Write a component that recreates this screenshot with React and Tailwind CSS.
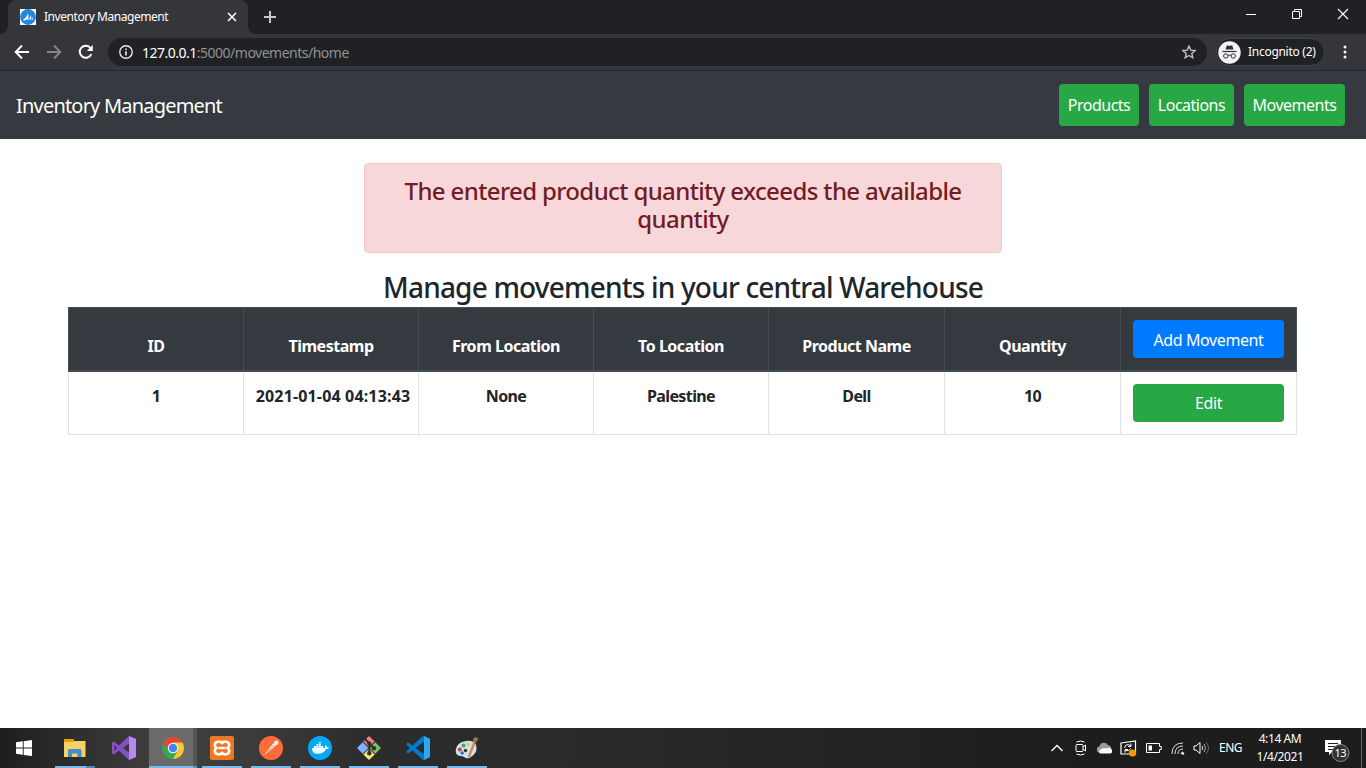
import React from "react";

function Logo({ children, size = 24, box = "0 0 24 24" }) {
  return (
    <svg width={size} height={size} viewBox={box} fill="none" className="shrink-0">
      {children}
    </svg>
  );
}

function TabStrip() {
  return (
    <div className="flex h-[34px] items-end bg-[#202124]">
      <svg width="8" height="8" className="shrink-0"><path d="M8 0V8H0A8 8 0 0 0 8 0Z" fill="#35363a" /></svg>
      <div className="flex h-[34px] w-[240px] items-center rounded-t-lg bg-[#35363a] pl-3 pr-[11px]">
        <svg width="16" height="16" viewBox="0 0 16 16" className="shrink-0">
          <rect width="16" height="16" fill="#fff" />
          <circle cx="8" cy="8" r="7.9" fill="#1e88e5" />
          <path d="M3 11.3Q6 8.8 8.2 4.4L8.6 10.6Q6.5 10 4.6 11.4ZM9.2 10.4 10.6 5.6 11 10.6ZM11.5 10.5 12 7.2 13 11Z" fill="#fff" />
        </svg>
        <span className="ml-2 whitespace-nowrap text-[12px] tracking-[-0.45px] text-white">Inventory Management</span>
        <svg width="10" height="10" viewBox="0 0 10 10" className="ml-auto"><path d="M1 1 9 9M9 1 1 9" stroke="#fff" strokeWidth="1.6" /></svg>
      </div>
      <svg width="8" height="8" className="shrink-0"><path d="M0 0V8H8A8 8 0 0 1 0 0Z" fill="#35363a" /></svg>
      <svg width="12" height="12" viewBox="0 0 12 12" className="mb-[11px] ml-2"><path d="M6 0V12M0 6H12" stroke="#c8c9cb" strokeWidth="2" /></svg>
      <div className="ml-auto flex h-[28px] items-center self-start pr-[17px]">
        <svg width="10" height="10" viewBox="0 0 10 10" className="mr-9"><path d="M0 5.5H10" stroke="#fff" /></svg>
        <svg width="10" height="10" viewBox="0 0 10 10" className="mr-[35px]"><path d="M.5 2.5H7.5V9.5H.5ZM2.5 2.5V.5H9.5V7.5H7.5" stroke="#fff" fill="none" /></svg>
        <svg width="12" height="12" viewBox="0 0 12 12"><path d="M1 1 11 11M11 1 1 11" stroke="#fff" strokeWidth="1.1" /></svg>
      </div>
    </div>
  );
}

function Toolbar() {
  return (
    <div className="flex h-[37px] items-center border-b border-[#25272a] bg-[#35363a]">
      <svg width="16" height="16" viewBox="0 0 16 16" className="ml-[14px]"><path d="M15 8H2M8 1.5 1.7 8 8 14.5" stroke="#fff" strokeWidth="1.9" fill="none" /></svg>
      <svg width="16" height="16" viewBox="0 0 16 16" className="ml-4"><path d="M1 8H14M8 1.5 14.3 8 8 14.5" stroke="#85868a" strokeWidth="1.9" fill="none" /></svg>
      <svg width="16" height="16" viewBox="0 0 16 16" className="ml-4"><path d="M13.3 10.1A6 6 0 1 1 12.6 4.2" stroke="#fff" strokeWidth="2" fill="none" /><path d="M14.8 1V7H8.8Z" fill="#fff" /></svg>
      <div className="ml-[14px] flex h-7 w-[1099px] items-center rounded-full bg-[#202124] pl-[11px] pr-[11px]">
        <svg width="14" height="14" viewBox="0 0 14 14"><circle cx="7" cy="7" r="6.2" stroke="#e8eaed" strokeWidth="1.4" fill="none" /><path d="M7 6.2V10.5M7 3.5V5" stroke="#e8eaed" strokeWidth="1.6" /></svg>
        <span className="ml-[9px] text-[14px] tracking-[-0.5px] text-[#8f9194]"><span className="text-white">127.0.0.1</span>:5000/movements/home</span>
        <svg width="14" height="14" viewBox="0 0 14 14" className="ml-auto"><path d="M7 1 8.7 5.1 13.2 5.5 9.8 8.4 10.8 12.8 7 10.5 3.2 12.8 4.2 8.4.8 5.5 5.3 5.1Z" stroke="#bdc1c6" strokeWidth="1.4" fill="none" /></svg>
      </div>
      <div className="ml-[9px] flex h-7 w-[109px] items-center rounded-full border border-[#414246] bg-[#202124] pl-[1px]">
        <svg width="23" height="23" viewBox="0 0 23 23" className="shrink-0">
          <circle cx="11.5" cy="11.5" r="11.2" fill="#f1f3f4" />
          <path d="M7.5 8.5 8.7 4.6H10.2L11.5 5 12.8 4.6H14.3L15.5 8.5Z" fill="#303134" />
          <path d="M4.5 10.5H18.5" stroke="#303134" strokeWidth="1.2" />
          <path d="M10 14.5Q11.5 13.6 13 14.5" stroke="#303134" fill="none" />
          <circle cx="7.8" cy="15" r="2.2" stroke="#303134" fill="none" />
          <circle cx="15.2" cy="15" r="2.2" stroke="#303134" fill="none" />
        </svg>
        <span className="ml-[7px] whitespace-nowrap text-[12px] tracking-[-0.28px] text-white">Incognito (2)</span>
      </div>
      <svg width="4" height="14" viewBox="0 0 4 14" className="ml-[18px]" fill="#fff"><circle cx="2" cy="2" r="1.5" /><circle cx="2" cy="7" r="1.5" /><circle cx="2" cy="12" r="1.5" /></svg>
    </div>
  );
}

function Navbar() {
  return (
    <nav className="flex h-[68px] items-center bg-[#343a40] pl-4 pr-[21px] text-white">
      <span className="pt-px text-[20px] tracking-[-0.8px]">Inventory Management</span>
      <div className="ml-auto flex gap-[10px] text-[16px] tracking-[-0.5px]">
        <a className="flex h-[42px] w-[80px] items-center justify-center rounded bg-[#28a745]">Products</a>
        <a className="flex h-[42px] w-[85px] items-center justify-center rounded bg-[#28a745]">Locations</a>
        <a className="flex h-[42px] w-[101px] items-center justify-center rounded bg-[#28a745]">Movements</a>
      </div>
    </nav>
  );
}

const heads = ["ID", "Timestamp", "From Location", "To Location", "Product Name", "Quantity"];
const row = ["1", "2021-01-04 04:13:43", "None", "Palestine", "Dell", "10"];

function Movements() {
  return (
    <main className="flex h-[589px] flex-col items-center bg-white pt-6 text-[#212529]">
      <div className="h-[90px] w-[638px] rounded border border-[#f5c6cb] bg-[#f8d7da] px-5 pt-[13px] text-center text-[24px] font-medium leading-[28px] tracking-[-0.62px] text-[#721c24]">
        The entered product quantity exceeds the available quantity
      </div>
      <h1 className="mt-[17px] h-[37px] text-[28px] font-medium leading-[34px] tracking-[-0.81px]">Manage movements in your central Warehouse</h1>
      <div className="mr-px w-[1229px] text-[16px] font-bold">
        <div className="grid h-[65px] grid-cols-[175px_175px_175px_175px_176px_176px_177px] border-b-2 border-t border-[#454d55] bg-[#343a40] text-white">
          {heads.map((h) => (
            <div key={h} className="flex items-end justify-center border-l border-[#454d55] pb-3 tracking-[-0.48px]">{h}</div>
          ))}
          <div className="border-x border-[#454d55] px-3 pt-3">
            <button className="flex h-[38px] w-[151px] items-center justify-center rounded bg-[#007bff] pt-px text-[16px] font-normal tracking-[-0.4px]">Add Movement</button>
          </div>
        </div>
        <div className="grid h-[63px] grid-cols-[175px_175px_175px_175px_176px_176px_177px] border-b border-[#dee2e6]">
          {row.map((c, i) => (
            <div key={c} className={`flex justify-center whitespace-nowrap border-l border-[#dee2e6] pt-3 ${i === 1 ? "pl-1 tracking-[0.16px]" : "tracking-[-0.6px]"}`}>{c}</div>
          ))}
          <div className="border-x border-[#dee2e6] px-3 pt-3">
            <button className="flex h-[38px] w-[151px] items-center justify-center rounded bg-[#28a745] text-[16px] font-normal tracking-[-0.4px] text-white">Edit</button>
          </div>
        </div>
      </div>
    </main>
  );
}

const apps = [
  <Logo key="files"><path d="M1 3H10.5V5H22.5V21H1Z" fill="#fbd063" /><path d="M1 3H10.5V6H1Z" fill="#dfa00c" /><path d="M5 21V14.5Q5 13 6.5 13H17Q18.5 13 18.5 14.5V21H14.5V17.5H9V21Z" fill="#3c91d6" /></Logo>,
  <Logo key="vs"><path d="M17 0 24 3V21L17 24 7 14.5 2 18.5 0 17.5V6.5L2 5.5 7 9.5ZM17.5 7 11 12 17.5 17ZM2.5 9V15L5 12Z" fill="#8450c8" fillRule="evenodd" /><path d="M17 0 24 3V21L17 24Z" fill="#b889f3" /></Logo>,
  <Logo key="chrome"><circle cx="12" cy="12" r="11" fill="#34a853" /><path d="M2.5 6.5A11 11 0 0 1 21.5 6.5H12L7.2 14.8Z" fill="#ea4335" /><path d="M21.5 6.5A11 11 0 0 1 12 23L16.8 14.8 12 6.5Z" fill="#fbc52d" /><circle cx="12" cy="12" r="5.3" fill="#fff" /><circle cx="12" cy="12" r="4.3" fill="#4285f4" /></Logo>,
  <Logo key="xampp"><rect width="24" height="24" rx="2" fill="#ef7622" /><path d="M12 7.2C10.5 4.8 4.8 5.2 4.8 9Q4.8 11 6.5 12 4.8 13 4.8 15C4.8 18.8 10.5 19.2 12 16.8 13.5 19.2 19.2 18.8 19.2 15Q19.2 13 17.5 12 19.2 11 19.2 9C19.2 5.2 13.5 4.8 12 7.2ZM9.5 12H14.5" stroke="#fff" strokeWidth="2.7" strokeLinejoin="round" strokeLinecap="round" /></Logo>,
  <Logo key="postman"><circle cx="12" cy="12" r="12" fill="#ff6c37" /><path d="M5 19 12 10 15 7 17 9 14 12Z" fill="#fff" /><circle cx="17.2" cy="6.8" r="2.2" fill="#fff" /><path d="M8 16 15 9" stroke="#ff6c37" strokeWidth=".7" /></Logo>,
  <Logo key="docker"><circle cx="12" cy="12" r="12" fill="#03a9f4" /><path d="M4 12H17Q17.3 10.5 17 9.8L17.8 9Q18.9 10 18.9 11 20.2 10.8 21 11.4 20.2 13 18.2 13 16 17.8 9.5 17.8 4 17.8 4 12ZM6 9.9H8V12H6ZM8.4 9.7H10.4V12H8.4ZM10.8 9.7H12.8V12H10.8ZM13.2 9.9H15.2V12H13.2ZM8.4 7.9H10.4V9.4H8.4ZM10.8 7.9H12.8V9.4H10.8ZM10.8 6H12.8V7.5H10.8Z" fill="#fff" /></Logo>,
  <Logo key="git"><path d="M12 0 17.7 5.6 12 11.2 6.3 5.6Z" fill="#f07c80" /><path d="M5.7 6.2 11.4 12 5.7 17.8 0 12Z" fill="#80b3ff" /><path d="M18.3 6.2 24 12 18.3 17.8 12.6 12Z" fill="#75c95f" /><path d="M12 12.8 17.7 18.4 12 24 6.3 18.4Z" fill="#f9e27a" /><path d="M8 3 12.3 7.3V17.5M12.3 7.5 17 12.3" stroke="#302e2e" strokeWidth="2" /><circle cx="12.3" cy="7.5" r="2.1" fill="#302e2e" /><circle cx="12.3" cy="17.3" r="2.2" fill="#302e2e" /><circle cx="17" cy="12.3" r="2.2" fill="#302e2e" /></Logo>,
  <Logo key="code"><path d="M17 0 24 3V21L17 24 1.2 9.5Q-.2 8.2 1.2 7L2 6.3 18 18.5V5.5L2 17.7.8 16.6Q-.2 15.5 1 14.5Z" fill="#007acc" /><path d="M18 0 24 3V21L18 24Z" fill="#31a7f0" /></Logo>,
  <Logo key="paint"><path d="M11 5Q2 6 .8 13.5 0 20 5.5 20 8 20 9 21 13 24 18 19.5 23 15 21 9 18.5 4 11 5Z" fill="#cae3ef" /><circle cx="8.5" cy="9.5" r="2" fill="#4aa83e" /><circle cx="4.8" cy="13.5" r="2" fill="#dc3d2c" /><circle cx="13.2" cy="8.5" r="1.8" fill="#f4c641" /><circle cx="7.2" cy="17" r="1.8" fill="#2876c8" /><circle cx="10.5" cy="14.5" r="1.7" fill="#333" /><path d="M20 5 13.8 21" stroke="#d98a38" strokeWidth="2.2" /><path d="M18 5Q17.5 1.5 21 1L23.5 2.5 21.5 6Z" fill="#987052" /></Logo>,
];

function Taskbar() {
  return (
    <footer className="flex h-10 bg-[linear-gradient(to_right,#1e1e1e_0%,#292929_4%,#404040_12%,#3c3c3c_18%,#2c2c2c_27%,#2a2a2a_40%,#1d1d1d_80%)] text-white">
      <div className="flex w-[50px] items-center pl-4">
        <svg width="16" height="16" viewBox="0 0 16 16" fill="#fff"><path d="M0 2.3 6.8 1.3V7.6H0ZM7.7 1.2 16 0V7.6H7.7ZM0 8.5H6.8V14.8L0 13.8ZM7.7 8.5H16V16L7.7 14.9Z" /></svg>
      </div>
      {apps.map((app, i) => (
        <div key={i} className={i === 2 ? "ml-px flex h-10 w-12 flex-col items-center bg-[#6b6b6b] shadow-[inset_-4px_0_#555555]" : "flex h-10 w-[49px] flex-col items-center"}>
          <div className="flex h-[38px] items-center pt-[2px]">{app}</div>
          {i === 0 && <div className="flex w-10"><div className="h-[2px] w-[31px] bg-[#76b9ed]" /><div className="h-[2px] w-[9px] bg-[#5584a8]" /></div>}
          {i === 2 && <div className="flex w-full"><div className="h-[2px] w-11 bg-[#76b9ed]" /><div className="h-[2px] w-1 bg-[#5d92bb]" /></div>}
          {i > 2 && <div className="h-[2px] w-10 bg-[#76b9ed]" />}
        </div>
      ))}
      <div className="ml-auto flex items-center">
        <svg width="12" height="8" viewBox="0 0 12 8" className="mr-3"><path d="M.5 7 6 1.5 11.5 7" stroke="#fff" strokeWidth="1.3" fill="none" /></svg>
        <svg width="12" height="16" viewBox="0 0 12 16" className="mr-[10px]" fill="none" stroke="#fff"><rect x="1" y="4.5" width="7" height="7" rx="1" /><path d="M8 7 10.5 5V11L8 9M1.5 2Q6 0 9.5 2M1.5 14Q6 16 9.5 14" /></svg>
        <svg width="16" height="12" viewBox="0 0 16 12" className="mr-[7px]"><path d="M3 10.5A3 3 0 0 1 2.5 4.5 4.5 4.5 0 0 1 10.8 3 3.8 3.8 0 0 1 14 8Z" fill="#9b9b9b" /><path d="M3 11.5A3 3 0 0 1 3 7.5L7 6Q8.5 6 10 6.5A3 3 0 0 1 15 8.5Q15.5 11.5 13 11.5Z" fill="#fff" /></svg>
        <svg width="17" height="17" viewBox="0 0 17 17" className="mr-[9px]" fill="none"><path d="M1 3 15.5 1V14H1Z" stroke="#fff" strokeWidth="1.2" /><path d="M4.5 8Q5 4.5 8 4.5L11 6M11 3.5V6.5H8M10.5 8.5Q9 12 5.5 10.5M5 12.5V9.5H8" stroke="#fff" /><circle cx="12.5" cy="13" r="3.6" fill="#ff9800" /></svg>
        <svg width="16" height="10" viewBox="0 0 16 10" className="mr-[9px]" fill="none"><path d="M.5.5H13.5V3.5H15.3V6.5H13.5V9.5H.5Z" stroke="#fff" /><path d="M2.5 2.5H6V7.5H2.5Z" fill="#fff" /></svg>
        <svg width="14" height="14" viewBox="0 0 14 14" className="mr-2" fill="none"><path d="M1 13Q1 2 12 2M4 13Q4 5 12 5M7 13Q7 8 12 8M10 13Q10 11 12 11" stroke="#ddd" /><circle cx="12" cy="12.5" r="1.2" fill="#fff" /></svg>
        <svg width="17" height="14" viewBox="0 0 17 14" fill="none"><path d="M1 5H3L7 1.5V12.5L3 9H1Z" stroke="#fff" /><path d="M9 5Q10.5 7 9 9" stroke="#ddd" /><path d="M11 3Q14 7 11 11" stroke="#aaa" /><path d="M13 1Q18 7 13 13" stroke="#666" /></svg>
        <span className="ml-[9px] w-[24px] whitespace-nowrap text-[12px] tracking-[-0.5px]">ENG</span>
        <div className="ml-2 w-[58px] whitespace-nowrap text-center text-[12px] leading-[18px] tracking-[-0.4px]"><div>4:14 AM</div><div>1/4/2021</div></div>
        <svg width="26" height="28" viewBox="0 0 26 28" className="ml-[15px] mr-[11px]">
          <path d="M1 6H17V18H8L5 21V18H1Z" fill="#fff" /><path d="M4 9.5H14M4 12.5H14M4 15.5H10" stroke="#222" />
          <circle cx="16.5" cy="19" r="8.5" fill="#333" stroke="#888" />
          <text x="16.3" y="23" textAnchor="middle" fill="#fff" fontSize="11" letterSpacing="-.4">13</text>
        </svg>
        <div className="mr-1 h-10 w-px bg-[#666]" />
      </div>
    </footer>
  );
}

export default function App() {
  return (
    <div className="h-[768px] w-[1366px] overflow-hidden bg-white font-['Noto_Sans','Open_Sans',sans-serif]">
      <TabStrip />
      <Toolbar />
      <Navbar />
      <Movements />
      <Taskbar />
    </div>
  );
}
